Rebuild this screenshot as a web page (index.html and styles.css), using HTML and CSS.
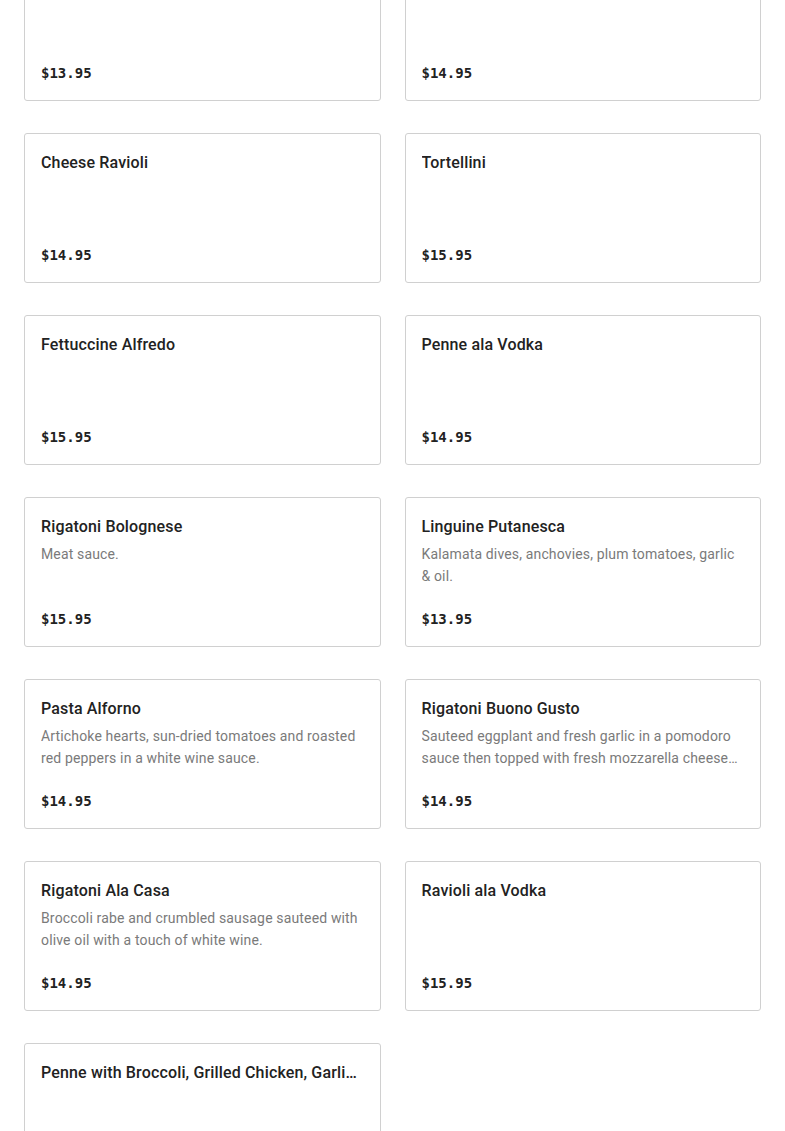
FILE: index.html
```html
<!DOCTYPE html>
<html lang="en">
<head>
<meta charset="utf-8">
<title>Menu</title>
<link rel="stylesheet" href="styles.css">
</head>
<body>
<div class="menu">
  <div class="card"><div class="title">Spaghetti Marinara</div><div class="price">$13.95</div></div>
  <div class="card"><div class="title">Baked Ziti</div><div class="price">$14.95</div></div>
  <div class="card"><div class="title">Cheese Ravioli</div><div class="price">$14.95</div></div>
  <div class="card"><div class="title">Tortellini</div><div class="price">$15.95</div></div>
  <div class="card"><div class="title">Fettuccine Alfredo</div><div class="price">$15.95</div></div>
  <div class="card"><div class="title">Penne ala Vodka</div><div class="price">$14.95</div></div>
  <div class="card"><div class="title">Rigatoni Bolognese</div><div class="desc">Meat sauce.</div><div class="price">$15.95</div></div>
  <div class="card"><div class="title">Linguine Putanesca</div><div class="desc">Kalamata dives, anchovies, plum tomatoes, garlic &amp; oil.</div><div class="price">$13.95</div></div>
  <div class="card"><div class="title">Pasta Alforno</div><div class="desc">Artichoke hearts, sun-dried tomatoes and roasted red peppers in a white wine sauce.</div><div class="price">$14.95</div></div>
  <div class="card"><div class="title">Rigatoni Buono Gusto</div><div class="desc">Sauteed eggplant and fresh garlic in a pomodoro sauce then topped with fresh mozzarella cheese and baked.</div><div class="price">$14.95</div></div>
  <div class="card"><div class="title">Rigatoni Ala Casa</div><div class="desc">Broccoli rabe and crumbled sausage sauteed with olive oil with a touch of white wine.</div><div class="price">$14.95</div></div>
  <div class="card"><div class="title">Ravioli ala Vodka</div><div class="price">$15.95</div></div>
  <div class="card"><div class="title">Penne with Broccoli, Grilled Chicken, Garlic &amp; Oil</div><div class="price">$15.95</div></div>
</div>
</body>
</html>
```
FILE: styles.css
```css
html, body {
  margin: 0;
  padding: 0;
  background: #fff;
}
body {
  font-family: Roboto, "Noto Sans", sans-serif;
  color: #222;
  overflow: hidden;
}
.menu {
  display: grid;
  grid-template-columns: 1fr 1fr;
  column-gap: 24px;
  row-gap: 32px;
  padding: 0 24px;
  margin-top: -49px;
}
.card {
  box-sizing: border-box;
  height: 150px;
  border: 1px solid #d0d0d0;
  border-radius: 3px;
  padding: 17px 16px 16px;
  display: flex;
  flex-direction: column;
  min-width: 0;
}
.title {
  font-size: 16px;
  font-weight: 500;
  line-height: 24px;
  letter-spacing: 0.15px;
  color: #222;
  white-space: nowrap;
  overflow: hidden;
  text-overflow: ellipsis;
}
.desc {
  margin-top: 4px;
  font-size: 14px;
  line-height: 22px;
  letter-spacing: 0.15px;
  color: #7a7a7a;
  display: -webkit-box;
  -webkit-line-clamp: 2;
  -webkit-box-orient: vertical;
  overflow: hidden;
}
.price {
  margin-top: auto;
  font-family: "DejaVu Sans Mono", "Liberation Mono", monospace;
  font-size: 14px;
  font-weight: bold;
  line-height: 22px;
  color: #222;
}
```
